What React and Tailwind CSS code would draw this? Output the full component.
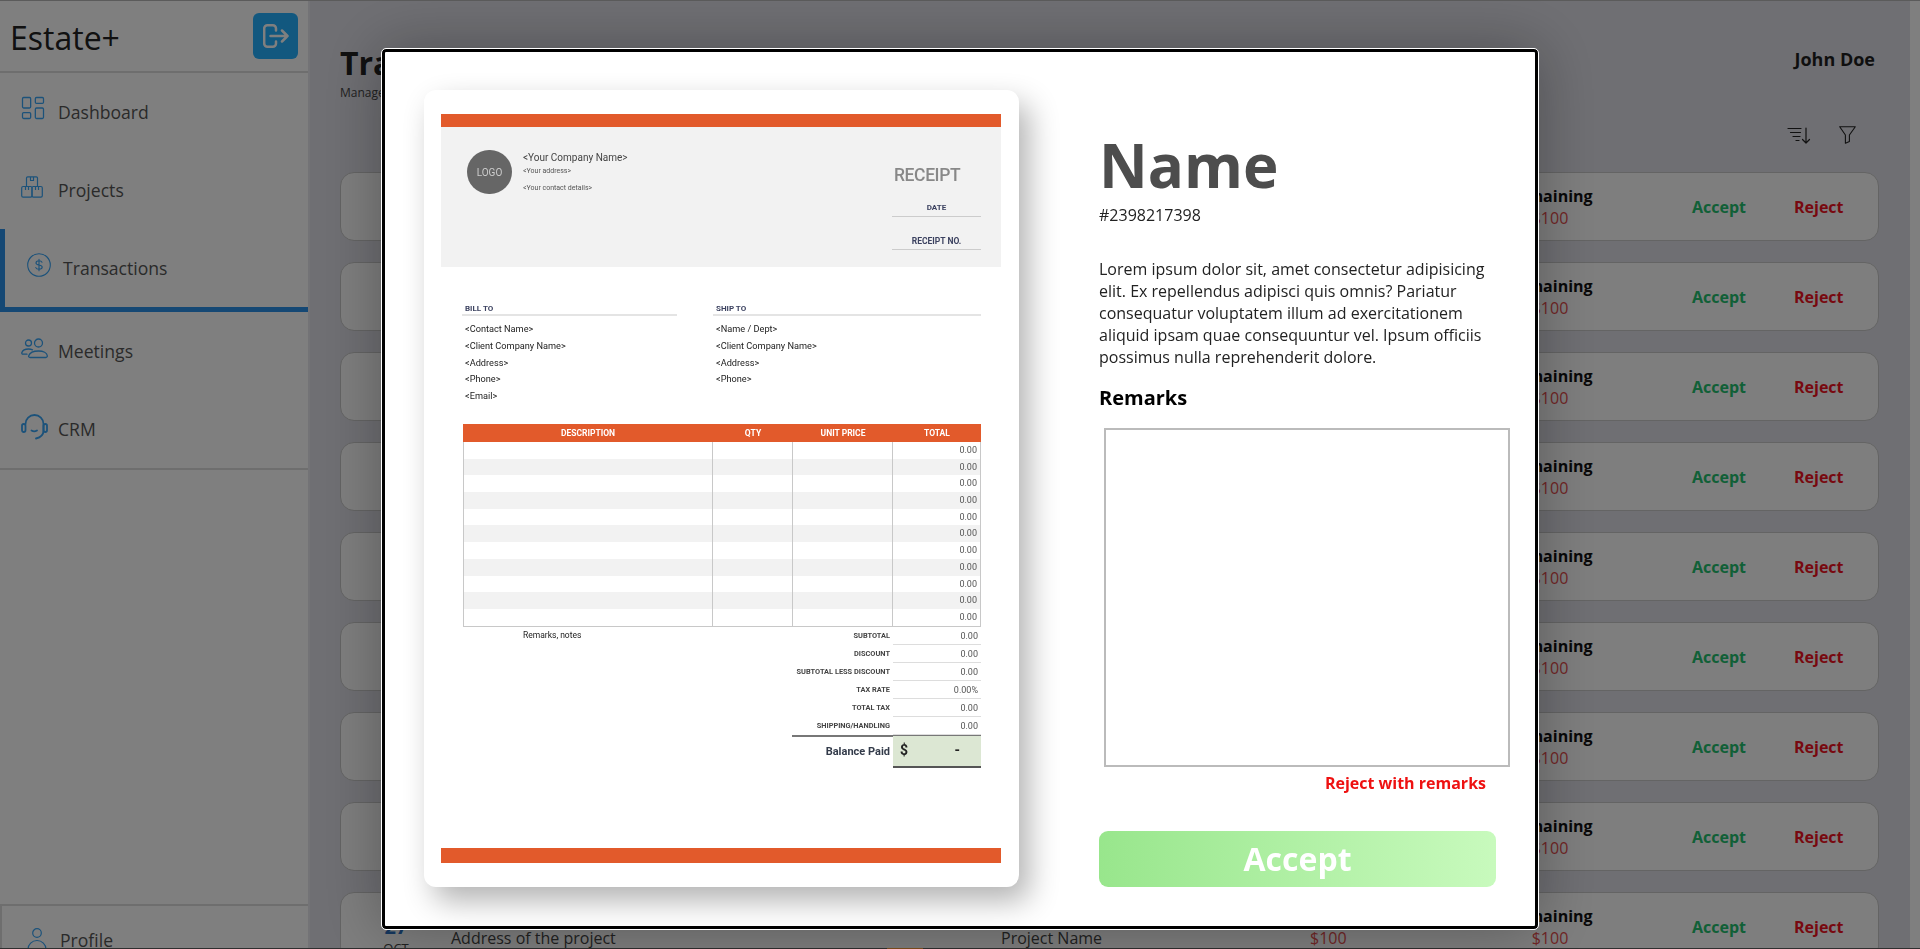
import { LayoutDashboard } from 'lucide-react'

const rowIds = [1, 2, 3, 4, 5, 6, 7, 8, 9]
const tableRows = [0, 1, 2, 3, 4, 5, 6, 7, 8, 9, 10]
const totals = [
  { label: 'SUBTOTAL', value: '0.00', note: 'Remarks, notes' },
  { label: 'DISCOUNT', value: '0.00' },
  { label: 'SUBTOTAL LESS DISCOUNT', value: '0.00' },
  { label: 'TAX RATE', value: '0.00%' },
  { label: 'TOTAL TAX', value: '0.00' },
  { label: 'SHIPPING/HANDLING', value: '0.00' },
]

const LogoutIcon = () => (
  <svg width="26" height="24" viewBox="0 0 26 24" fill="none" stroke="#fff" strokeWidth="2.5" strokeLinecap="round" strokeLinejoin="round">
    <path d="M13 6.500V4.500A3.200 3.200 0 0 0 9.800 1.300H4.400A3.200 3.200 0 0 0 1.200 4.500v15a3.200 3.200 0 0 0 3.200 3.200h5.400a3.200 3.200 0 0 0 3.200-3.200v-2" />
    <path d="M7.500 12h17M19 6.500l5.500 5.500-5.500 5.500" />
  </svg>
)

const BoxesIcon = () => (
  <svg width="22" height="22" viewBox="0 0 22 22" fill="none" stroke="#38a4f5" strokeWidth="1.200" strokeLinejoin="round">
    <path d="M5.500 10.500V2a1.200 1.200 0 0 1 1.200-1.200h8.600A1.200 1.200 0 0 1 16.500 2v8.500" />
    <path d="M9.500 1v3.500h3V1" />
    <rect x="0.700" y="10.500" width="10.300" height="10.700" rx="1.400" />
    <rect x="11" y="10.500" width="10.300" height="10.700" rx="1.400" />
    <path d="M4.500 10.500v3.500M7.500 10.500v3.500M14.500 10.500v3.500M17.500 10.500v3.500" />
  </svg>
)

const DollarIcon = () => (
  <svg width="24" height="24" viewBox="0 0 24 24" fill="none" stroke="#38a4f5" strokeWidth="1.100" strokeLinecap="round">
    <circle cx="12" cy="12" r="11.300" />
    <path d="M15 9.200c-.4-.8-1.400-1.400-3-1.400-1.700 0-3 .8-3 2.100 0 2.900 6.200 1.300 6.200 4.200 0 1.300-1.400 2.100-3.200 2.100-1.600 0-2.800-.6-3.200-1.600M12 6.300v11.400" />
  </svg>
)

const PeopleIcon = () => (
  <svg width="27" height="21" viewBox="0 0 27 21" fill="none" stroke="#38a4f5" strokeWidth="1.300" strokeLinecap="round" strokeLinejoin="round">
    <circle cx="7.500" cy="5" r="3" />
    <circle cx="17.500" cy="5" r="4" />
    <path d="M9 19.500c-1 0-1.700-.8-1.300-1.800 1-2.800 5-4.700 9.800-4.700s8.500 1.900 8.800 4.700c.1 1-.5 1.800-1.300 1.800z" />
    <path d="M11.500 11.800c-1-.5-2.400-.8-4-.8-3.400 0-6 1.700-6.700 3.700-.2.900.3 1.500 1.200 1.500h4" />
  </svg>
)

const HeadsetIcon = () => (
  <svg width="27" height="27" viewBox="0 0 27 27" fill="none" stroke="#38a4f5" strokeWidth="1.800" strokeLinecap="round" strokeLinejoin="round">
    <path d="M4.500 11a9 9 0 0 1 18 0v6.500c0 4.500-3 7-7.500 8" />
    <rect x="1" y="11" width="3.500" height="8" rx="1.700" />
    <rect x="22.500" y="11" width="3.500" height="8" rx="1.700" />
    <path d="M10.500 17.500c1.500 1 4 1 5.500 0" />
  </svg>
)

const PersonIcon = () => (
  <svg width="20" height="24" viewBox="0 0 20 24" fill="none" stroke="#38a4f5" strokeWidth="1.200">
    <circle cx="10" cy="5" r="4.300" />
    <path d="M1 24v-2.500a9 9 0 0 1 18 0V24" />
  </svg>
)

const SortIcon = () => (
  <svg width="24" height="17" viewBox="0 0 24 17" fill="none" stroke="#222" strokeWidth="1.200" strokeLinecap="round" strokeLinejoin="round">
    <path d="M1 1.500h13M3.500 5.500h10M6 9.500h7M9 13.500h3" />
    <path d="M19 1v15M15.500 12.500L19 16l3.500-3.500" />
  </svg>
)

const FunnelIcon = () => (
  <svg width="17" height="18" viewBox="0 0 17 18" fill="none" stroke="#222" strokeWidth="1.100" strokeLinejoin="round">
    <path d="M.7.800h15.600L10.400 9v6.500L6.400 17.200V9z" />
  </svg>
)

const NavItem = ({ icon, label, active }) => (
  <div className={active ? 'h-[83px] flex items-center pl-[22px] border-l-[5px] border-b-[5px] border-[#2a90e8]' : 'h-[78px] flex items-center pl-[21px]'}>
    <div className={active ? 'w-[36px] -mt-[6px]' : 'w-[37px] -mt-[6px]'}>{icon}</div>
    <span className="text-[17.600px] text-[#555]">{label}</span>
  </div>
)

const TransactionCard = () => (
  <div className="h-[69px] shrink-0 rounded-[14px] border border-[#c8c8c8] bg-[#fcfcfc] flex items-center">
    <div className="w-[110px] pl-[41px] pt-[18px] shrink-0 text-center">
      <div className="w-[28px] text-[20px] leading-[24px] font-bold text-[#2a70c0]">27</div>
      <div className="w-[28px] text-[13px] leading-[18px] text-[#444]">OCT</div>
    </div>
    <div className="w-[550px] shrink-0">
      <div className="text-[16px] leading-[22px] font-bold text-[#222]">Address</div>
      <div className="text-[16px] leading-[22px] text-[#444]">Address of the project</div>
    </div>
    <div className="w-[309px] shrink-0">
      <div className="text-[16px] leading-[22px] font-bold text-[#222]">Project</div>
      <div className="text-[16px] leading-[22px] text-[#444]">Project Name</div>
    </div>
    <div className="w-[197px] shrink-0">
      <div className="text-[16px] leading-[22px] font-bold text-[#222]">Amount</div>
      <div className="text-[16px] leading-[22px] text-[#e24c4c]">$100</div>
    </div>
    <div className="w-[86px] shrink-0 text-center">
      <div className="text-[16px] leading-[22px] font-bold text-[#111]">Remaining</div>
      <div className="text-[16px] leading-[22px] text-[#e24c4c]">$100</div>
    </div>
    <div className="ml-[99px] w-[102px] shrink-0 text-[16px] font-bold text-[#22c06e]">Accept</div>
    <div className="text-[16px] font-bold text-[#f01020]">Reject</div>
  </div>
)

const Receipt = () => (
  <div className="w-[560px] h-[749px] flex flex-col blur-[0.25px] font-['Roboto',sans-serif] text-[#333]">
    <div className="h-[13px] bg-[#e25a2b]" />
    <div className="h-[140px] bg-[#f2f2f2] flex justify-between pl-[26px] pr-[20px] pt-[23px]">
      <div className="flex">
        <div className="w-[45px] h-[44px] rounded-full bg-[#666] text-[#ccc] text-[10px] flex items-center justify-center">LOGO</div>
        <div className="ml-[11px]">
          <div className="text-[10px] leading-[16px] text-[#444]">&lt;Your Company Name&gt;</div>
          <div className="text-[7px] leading-[9px] mt-[1px] text-[#555]">&lt;Your address&gt;</div>
          <div className="text-[7px] leading-[9px] mt-[8px] text-[#555]">&lt;Your contact details&gt;</div>
        </div>
      </div>
      <div className="w-[89px] pt-[13px]">
        <div className="text-[17.500px] leading-[24px] font-medium text-[#888] pl-[2px] tracking-[-0.4px]">RECEIPT</div>
        <div className="mt-[15px] h-[15px] border-b border-[#ccc] text-center text-[8px] font-bold text-[#3c4260] leading-[12px]">DATE</div>
        <div className="mt-[18px] h-[15px] border-b border-[#ccc] text-center text-[8.500px] font-bold text-[#3c4260] leading-[12px]">RECEIPT NO.</div>
      </div>
    </div>
    <div className="flex pl-[21px] pr-[20px] pt-[36px] gap-[36px] h-[157px]">
      <div className="w-[215px]">
        <div className="h-[13px] mb-[5px] border-b-2 border-[#e4e4e4] pl-[3px] text-[8px] leading-[11px] font-bold text-[#3c4260]">BILL TO</div>
        {['<Contact Name>', '<Client Company Name>', '<Address>', '<Phone>', '<Email>'].map((t) => (
          <div key={t} className="pl-[3px] text-[9.200px] leading-[16.800px] text-[#222]">{t}</div>
        ))}
      </div>
      <div className="flex-1">
        <div className="h-[13px] mb-[5px] border-b-2 border-[#e4e4e4] pl-[3px] text-[8px] leading-[11px] font-bold text-[#3c4260]">SHIP TO</div>
        {['<Name / Dept>', '<Client Company Name>', '<Address>', '<Phone>'].map((t) => (
          <div key={t} className="pl-[3px] text-[9.200px] leading-[16.800px] text-[#222]">{t}</div>
        ))}
      </div>
    </div>
    <div className="ml-[22px] w-[518px]">
      <div className="h-[18px] bg-[#e25a2b] grid grid-cols-[250px_80px_100px_88px] text-center text-[8.500px] leading-[18px] font-bold text-white">
        <div>DESCRIPTION</div>
        <div>QTY</div>
        <div>UNIT PRICE</div>
        <div>TOTAL</div>
      </div>
      <div className="border-x border-b border-[#c8c8c8]">
        {tableRows.map((i) => (
          <div key={i} className={i % 2 === 1 ? 'h-[16.700px] grid grid-cols-[249px_80px_100px_87px] bg-[#f2f2f2]' : 'h-[16.700px] grid grid-cols-[249px_80px_100px_87px]'}>
            <div className="border-r border-[#c8c8c8]" />
            <div className="border-r border-[#c8c8c8]" />
            <div className="border-r border-[#c8c8c8]" />
            <div className="text-right pr-[3px] text-[9px] leading-[16.700px] text-[#555]">0.00</div>
          </div>
        ))}
      </div>
      {totals.map((row) => (
        <div key={row.label} className="h-[18px] flex items-center">
          <div className="flex-1 pl-[60px] text-[8.500px] text-[#222]">{row.note}</div>
          <div className="text-right pr-[3px] text-[7.400px] font-bold text-[#444]">{row.label}</div>
          <div className="w-[88px] h-full border-b border-[#ddd] text-right pr-[3px] text-[9px] leading-[18px] text-[#555]">{row.value}</div>
        </div>
      ))}
      <div className="ml-[329px] h-[32px] flex border-t-2 border-[#777]">
        <div className="flex-1 text-right pr-[3px] text-[11px] leading-[30px] font-bold text-[#333b4a]">Balance Paid</div>
        <div className="w-[88px] h-[32px] -mt-px bg-[#dce7d3] border-b-2 border-[#555] flex items-center pl-[7px] pr-[21px] justify-between text-[14px] font-bold text-[#222]">
          <span>$</span>
          <span>-</span>
        </div>
      </div>
    </div>
    <div className="mt-auto h-[15px] bg-[#e25a2b]" />
  </div>
)

const App = () => {
  return (
    <div className="relative h-screen w-full overflow-hidden flex flex-col bg-[#dedee6] font-['Open_Sans',sans-serif]">
      <div className="h-px shrink-0 bg-[#b6b6b6]" />
      <div className="flex-1 flex min-h-0">
        <aside className="w-[310px] shrink-0 bg-white border-r-2 border-[#e6e6ec] flex flex-col">
          <div className="h-[72px] shrink-0 border-b-2 border-[#dcdcdc] flex items-start justify-between pl-[10px] pr-[10px] pt-[12px]">
            <span className="text-[32px] leading-[50px] text-[#222]">Estate+</span>
            <div className="w-[45px] h-[46px] rounded-[6px] bg-[#24b0ff] flex items-center justify-center">
              <LogoutIcon />
            </div>
          </div>
          <NavItem icon={<LayoutDashboard size={28} strokeWidth={1.100} color="#38a4f5" className="-ml-[2px] -mt-[2px]" />} label="Dashboard" />
          <NavItem icon={<BoxesIcon />} label="Projects" />
          <NavItem icon={<DollarIcon />} label="Transactions" active />
          <NavItem icon={<PeopleIcon />} label="Meetings" />
          <NavItem icon={<HeadsetIcon />} label="CRM" />
          <div className="h-[2px] bg-[#dcdcdc]" />
          <div className="mt-auto h-[44px] border-t-2 border-l-2 border-[#dcdcdc] flex items-start pl-[25px] pt-[22px]">
            <PersonIcon />
            <span className="ml-[13px] -mt-[1px] text-[17.600px] leading-[26px] text-[#555]">Profile</span>
          </div>
        </aside>
        <main className="flex-1 min-w-0 overflow-hidden pl-[30px] pr-[31px] pt-[42px]">
          <div className="flex justify-between">
            <div>
              <h1 className="text-[32px] leading-[40px] font-bold text-[#222]">Transactions</h1>
              <p className="text-[12px] leading-[20px] text-[#444]">Manage your transactions</p>
            </div>
            <div className="text-[18px] leading-[32px] pr-[4px] font-bold text-[#1e1e1e]">John Doe</div>
          </div>
          <div className="flex justify-end gap-[28px] items-center mt-[23px] pr-[23px]">
            <SortIcon />
            <FunnelIcon />
          </div>
          <div className="flex flex-col gap-[21px] mt-[28px]">
            {rowIds.map((id) => (
              <TransactionCard key={id} />
            ))}
          </div>
        </main>
        <div className="w-[10px] shrink-0 bg-white" />
      </div>
      <div className="h-px shrink-0 bg-[#5e5e5e] flex">
        <div className="ml-[887px] w-[36px] bg-[#ff9d3c]" />
      </div>

      <div className="fixed inset-0 bg-black/50 flex justify-center items-start pt-[49px]">
        <div className="w-[1156px] h-[880px] bg-white border-[3px] border-black rounded-[4px] outline outline-white shadow-[0_0_60px_rgba(0,0,0,0.3)] flex pl-[39px] pt-[38px]">
          <div className="w-[595px] h-[797px] shrink-0 bg-white rounded-[12px] shadow-[10px_14px_30px_rgba(0,0,0,0.3)] pl-[17px] pt-[24px]">
            <Receipt />
          </div>
          <div className="ml-[80px] w-[420px] flex flex-col">
            <h2 className="mt-[45px] text-[60px] leading-[60px] font-bold text-[#4d4d4d]">Name</h2>
            <p className="mt-[8px] text-[16px] leading-[24px] text-[#222]">#2398217398</p>
            <p className="mt-[31px] w-[395px] text-[16px] leading-[22px] text-[#222]">
              Lorem ipsum dolor sit, amet consectetur adipisicing elit. Ex repellendus adipisci quis omnis? Pariatur consequatur voluptatem illum ad exercitationem aliquid ipsam quae consequuntur vel. Ipsum officiis possimus nulla reprehenderit dolore.
            </p>
            <h3 className="mt-[16px] text-[20px] leading-[28px] font-bold text-black">Remarks</h3>
            <textarea className="ml-[5px] mt-[16px] w-[406px] h-[339px] shrink-0 border-2 border-[#bbb] resize-none outline-none" />
            <div className="mt-[4px] w-[387px] text-right text-[16px] leading-[24px] font-bold text-[#ee1111]">Reject with remarks</div>
            <button className="mt-[36px] w-[397px] h-[56px] rounded-[9px] bg-gradient-to-r from-[#98e68c] to-[#c8fabd] text-white text-[32px] font-bold">Accept</button>
          </div>
        </div>
      </div>
    </div>
  )
}

export default App
